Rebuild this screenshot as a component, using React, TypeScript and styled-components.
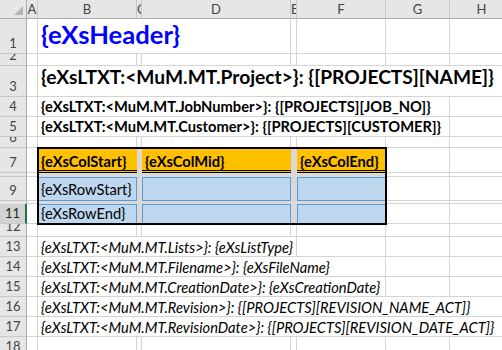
import React from 'react'
import styled, { createGlobalStyle, css } from 'styled-components'

const GRID = '#d4d4d4'
const HEAD_BG = '#e6e6e6'
const FONT = `Lato, "Liberation Sans", sans-serif`

const GlobalStyle = createGlobalStyle`
  html, body {
    margin: 0;
    padding: 0;
    background: #fff;
    overflow: hidden;
  }
  body {
    font-family: ${FONT};
  }
`

const Sheet = styled.div`
  display: grid;
  grid-template-columns: 27px 11px 99px 5px 149px 6px 89px 64px 64px;
  grid-template-rows: 19px 35px 12px 31px 20px 20px 11px 25px 4px 24px 3px 20px 13px repeat(6, 20px);
  width: 502px;
  height: 350px;
  overflow: hidden;
  font-family: ${FONT};
  color: #000;
`

const Corner = styled.div`
  position: relative;
  background: ${HEAD_BG};
  border-right: 1px solid #ababab;
  border-bottom: 1px solid #ababab;

  &::after {
    content: '';
    position: absolute;
    right: 3px;
    bottom: 3px;
    border-style: solid;
    border-width: 0 0 9px 9px;
    border-color: transparent transparent #b4b4b4 transparent;
  }
`

const ColHead = styled.div`
  display: flex;
  align-items: center;
  justify-content: safe center;
  overflow: hidden;
  background: ${HEAD_BG};
  border-right: 1px solid #c8c8c8;
  border-bottom: 1px solid #ababab;
  font-size: 13px;
  color: #444;
`

const RowHead = styled.div<{ $selected?: boolean }>`
  display: flex;
  align-items: flex-end;
  justify-content: center;
  box-sizing: border-box;
  padding-bottom: 3px;
  overflow: hidden;
  background: ${p => (p.$selected ? '#d2d2d2' : HEAD_BG)};
  border-right: ${p => (p.$selected ? '2px solid #217346' : '1px solid #ababab')};
  border-bottom: 1px solid #c8c8c8;
  font-size: 13px;
  line-height: 14px;
  color: ${p => (p.$selected ? '#222' : '#444')};
`

const Cell = styled.div<{ $span?: number }>`
  grid-column: span ${p => p.$span ?? 1};
  box-sizing: border-box;
  min-width: 0;
  border-right: 1px solid ${GRID};
  border-bottom: 1px solid ${GRID};
`

type Variant = 'title' | 'big' | 'bold' | 'italic'

const variants: Record<Variant, ReturnType<typeof css>> = {
  title: css`
    font-size: 25.6px;
    font-weight: 700;
    color: #0000ff;
  `,
  big: css`
    font-size: 19.2px;
    font-weight: 700;
  `,
  bold: css`
    font-size: 14.7px;
    font-weight: 700;
  `,
  italic: css`
    font-size: 14.7px;
    font-style: italic;
  `,
}

const TextCell = styled(Cell)<{ $variant: Variant; $pb: number }>`
  display: flex;
  align-items: flex-end;
  padding: 0 0 ${p => p.$pb}px 3px;
  white-space: nowrap;
  line-height: 1;
  ${p => variants[p.$variant]}
`

const Block = styled.div`
  grid-column: span 5;
  grid-row: span 5;
  position: relative;
  z-index: 1;
  display: grid;
  grid-template-columns: 99px 5px 149px 6px 89px;
  grid-template-rows: 25px 4px 24px 3px 20px;
  background: #d9d9d9;
  outline: 2px solid #000;
  outline-offset: -1px;
`

const HeadCell = styled.div`
  display: flex;
  align-items: flex-end;
  box-sizing: border-box;
  padding: 0 0 1px 3px;
  background: #ffc000;
  border-bottom: 3px double #000;
  font-size: 14.7px;
  font-weight: 700;
  line-height: 1;
  white-space: nowrap;
`

const DataCell = styled.div<{ $pb: number }>`
  display: flex;
  align-items: flex-end;
  box-sizing: border-box;
  padding: 0 0 ${p => p.$pb}px 2px;
  background: #bdd7ee;
  border: 1px solid #5b9bd5;
  font-size: 14.7px;
  line-height: 1;
  white-space: nowrap;
`

const Gap = styled.div<{ $span?: number }>`
  grid-column: span ${p => p.$span ?? 1};
`

const LETTERS = ['A', 'B', 'C', 'D', 'E', 'F', 'G', 'H']

function Blanks({ count }: { count: number }) {
  return (
    <>
      {Array.from({ length: count }, (_, i) => (
        <Cell key={i} />
      ))}
    </>
  )
}

function EmptyRow({ n }: { n: number }) {
  return (
    <>
      <RowHead>{n}</RowHead>
      <Blanks count={8} />
    </>
  )
}

type TextRowProps = { n: number; text: string; span: number; variant: Variant; pb: number }

function TextRow({ n, text, span, variant, pb }: TextRowProps) {
  return (
    <>
      <RowHead>{n}</RowHead>
      <Cell />
      <TextCell $span={span} $variant={variant} $pb={pb}>
        {text}
      </TextCell>
      <Blanks count={7 - span} />
    </>
  )
}

// rows 7-11: the template table sits over columns B..F
function SideCells({ n, selected }: { n: number; selected?: boolean }) {
  return (
    <>
      <RowHead $selected={selected}>{n}</RowHead>
      <Cell />
    </>
  )
}

export default function App() {
  return (
    <>
      <GlobalStyle />
      <Sheet>
        <Corner />
        {LETTERS.map(l => (
          <ColHead key={l}>{l}</ColHead>
        ))}

        <TextRow n={1} text="{eXsHeader}" span={3} variant="title" pb={5} />
        <EmptyRow n={2} />
        <TextRow n={3} text="{eXsLTXT:<MuM.MT.Project>}: {[PROJECTS][NAME]}" span={7} variant="big" pb={10} />
        <TextRow n={4} text="{eXsLTXT:<MuM.MT.JobNumber>}: {[PROJECTS][JOB_NO]}" span={6} variant="bold" pb={2} />
        <TextRow n={5} text="{eXsLTXT:<MuM.MT.Customer>}: {[PROJECTS][CUSTOMER]}" span={6} variant="bold" pb={2} />
        <EmptyRow n={6} />

        <SideCells n={7} />
        <Block>
          <HeadCell>{'{eXsColStart}'}</HeadCell>
          <Gap />
          <HeadCell>{'{eXsColMid}'}</HeadCell>
          <Gap />
          <HeadCell>{'{eXsColEnd}'}</HeadCell>

          <Gap $span={5} />

          <DataCell $pb={3}>{'{eXsRowStart}'}</DataCell>
          <Gap />
          <DataCell $pb={3} />
          <Gap />
          <DataCell $pb={3} />

          <Gap $span={5} />

          <DataCell $pb={2}>{'{eXsRowEnd}'}</DataCell>
          <Gap />
          <DataCell $pb={2} />
          <Gap />
          <DataCell $pb={2} />
        </Block>
        <Blanks count={2} />
        <SideCells n={8} />
        <Blanks count={2} />
        <SideCells n={9} />
        <Blanks count={2} />
        <SideCells n={10} />
        <Blanks count={2} />
        <SideCells n={11} selected />
        <Blanks count={2} />

        <EmptyRow n={12} />
        <TextRow n={13} text="{eXsLTXT:<MuM.MT.Lists>}: {eXsListType}" span={4} variant="italic" pb={1} />
        <TextRow n={14} text="{eXsLTXT:<MuM.MT.Filename>}: {eXsFileName}" span={5} variant="italic" pb={1} />
        <TextRow n={15} text="{eXsLTXT:<MuM.MT.CreationDate>}: {eXsCreationDate}" span={5} variant="italic" pb={1} />
        <TextRow n={16} text="{eXsLTXT:<MuM.MT.Revision>}: {[PROJECTS][REVISION_NAME_ACT]}" span={7} variant="italic" pb={1} />
        <TextRow n={17} text="{eXsLTXT:<MuM.MT.RevisionDate>}: {[PROJECTS][REVISION_DATE_ACT]}" span={7} variant="italic" pb={1} />
        <EmptyRow n={18} />
      </Sheet>
    </>
  )
}
